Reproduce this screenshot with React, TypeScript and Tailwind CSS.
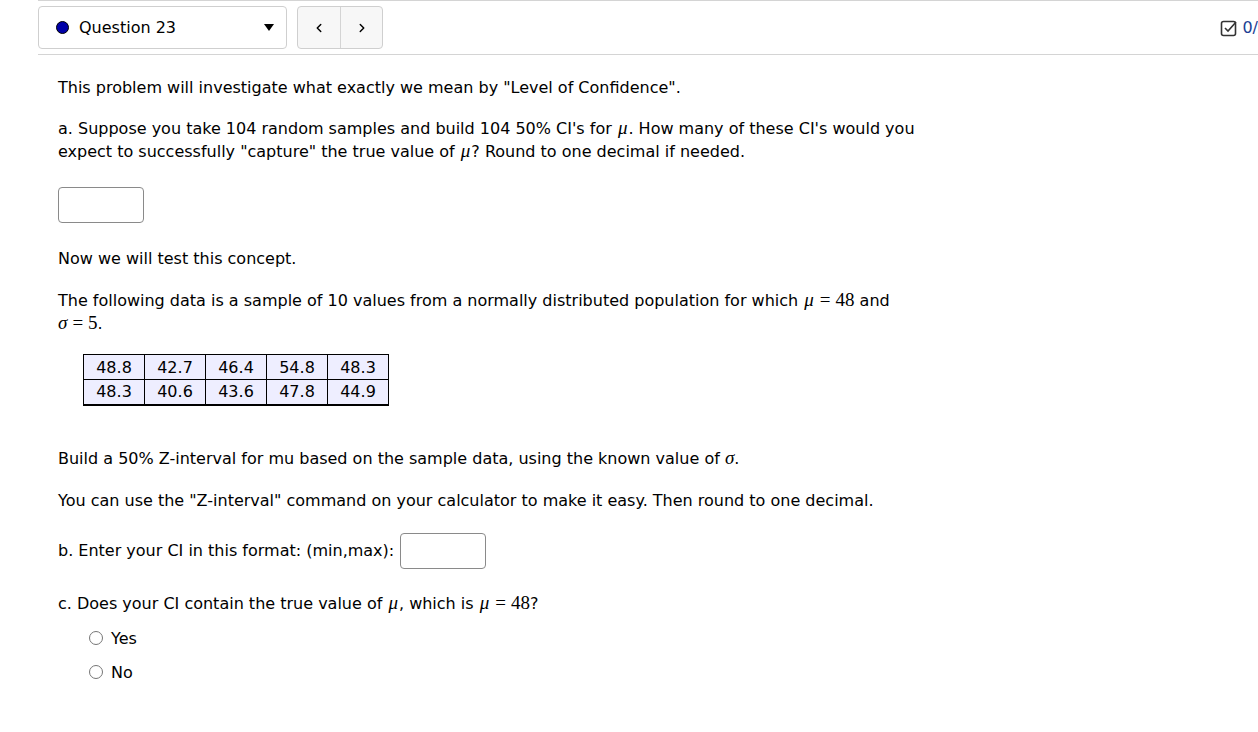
import { ChevronLeft, ChevronRight } from 'lucide-react';

const rows = [
    ['48.8', '42.7', '46.4', '54.8', '48.3'],
    ['48.3', '40.6', '43.6', '47.8', '44.9'],
];

function Mu() {
    return <span className="font-['Liberation_Serif',serif] italic text-[19px] leading-none px-[1px]">μ</span>;
}

function Sigma() {
    return <span className="font-['Liberation_Serif',serif] italic text-[19px] leading-none">σ</span>;
}

function Eq({ v }: { v: string }) {
    return (
        <span className="font-['Liberation_Serif',serif] text-[19px] leading-none">
            <span className="mx-[5px]">=</span>
            {v}
        </span>
    );
}

function Radio({ label }: { label: string }) {
    return (
        <label className="flex items-center gap-[8px] h-[23px]">
            <span className="w-[14px] h-[14px] rounded-full border border-[#767676] bg-white" />
            <span>{label}</span>
        </label>
    );
}

export default function App() {
    return (
        <div className="w-[1258px] h-[732px] overflow-hidden bg-white text-[16px] leading-[23px] text-black font-['DejaVu_Sans',sans-serif]">
            <div className="ml-[38px] border-t border-b border-[#d4d4d4] pt-[5px] pb-[5px] flex items-center">
                <div className="w-[249px] h-[43px] border border-[#cfcfcf] rounded-[4px] flex items-center pl-[17px] pr-[12px]">
                    <span className="w-[13px] h-[13px] rounded-full bg-[#0000a8] border border-black" />
                    <span className="ml-[10px] flex-1">Question 23</span>
                    <span className="w-0 h-0 border-l-[5px] border-r-[5px] border-t-[7px] border-l-transparent border-r-transparent border-t-black" />
                </div>
                <div className="ml-[10px] h-[43px] flex border border-[#cfcfcf] rounded-[4px] bg-[#f7f7f7]">
                    <button className="w-[43px] flex items-center justify-center border-r border-[#d4d4d4]">
                        <ChevronLeft className="w-[14px] h-[14px]" strokeWidth={2.5} />
                    </button>
                    <button className="w-[41px] flex items-center justify-center">
                        <ChevronRight className="w-[14px] h-[14px]" strokeWidth={2.5} />
                    </button>
                </div>
                <div className="ml-auto flex items-center gap-[4px]">
                    <svg width="18" height="18" viewBox="0 0 18 18" fill="none" stroke="#333" strokeWidth="1.6">
                        <rect x="1.5" y="2.5" width="14" height="14" rx="2" />
                        <path d="M5 9 l3 3 l8-9" />
                    </svg>
                    <span className="text-[#1c3f94]">0/</span>
                </div>
            </div>

            <div className="pl-[58px] w-[916px]">
                <p className="mt-[21px]">This problem will investigate what exactly we mean by "Level of Confidence".</p>
                <p className="mt-[18px]">
                    a. Suppose you take 104 random samples and build 104 50% CI's for <Mu />. How many of these CI's would you expect to successfully "capture" the true value of <Mu />? Round to one decimal if needed.
                </p>
                <input className="block mt-[24px] w-[86px] h-[36px] border border-[#8a8a8a] rounded-[4px]" />
                <p className="mt-[24px]">Now we will test this concept.</p>
                <p className="mt-[19px]">
                    The following data is a sample of 10 values from a normally distributed population for which <Mu /><Eq v="48" /> and{' '}
                    <Sigma /><Eq v="5" />.
                </p>
                <table className="mt-[19px] ml-[25px] border-collapse border-b-2 border-black bg-[#eeeeff]">
                    <tbody>
                        {rows.map((r, i) => (
                            <tr key={i}>
                                {r.map((c, j) => (
                                    <td key={j} className="border border-black w-[61px] h-[25px] text-center leading-[23px] p-0">
                                        {c}
                                    </td>
                                ))}
                            </tr>
                        ))}
                    </tbody>
                </table>
                <p className="mt-[41px]">
                    Build a 50% Z-interval for mu based on the sample data, using the known value of <Sigma />.
                </p>
                <p className="mt-[19px]">You can use the "Z-interval" command on your calculator to make it easy. Then round to one decimal.</p>
                <div className="mt-[21px] flex items-center gap-[6px]">
                    <span>b. Enter your CI in this format: (min,max):</span>
                    <input className="w-[86px] h-[36px] border border-[#8a8a8a] rounded-[4px]" />
                </div>
                <p className="mt-[23px]">
                    c. Does your CI contain the true value of <Mu />, which is <Mu /><Eq v="48" />?
                </p>
                <div className="mt-[12px] pl-[31px] flex flex-col gap-[11px]">
                    <Radio label="Yes" />
                    <Radio label="No" />
                </div>
            </div>
        </div>
    );
}
